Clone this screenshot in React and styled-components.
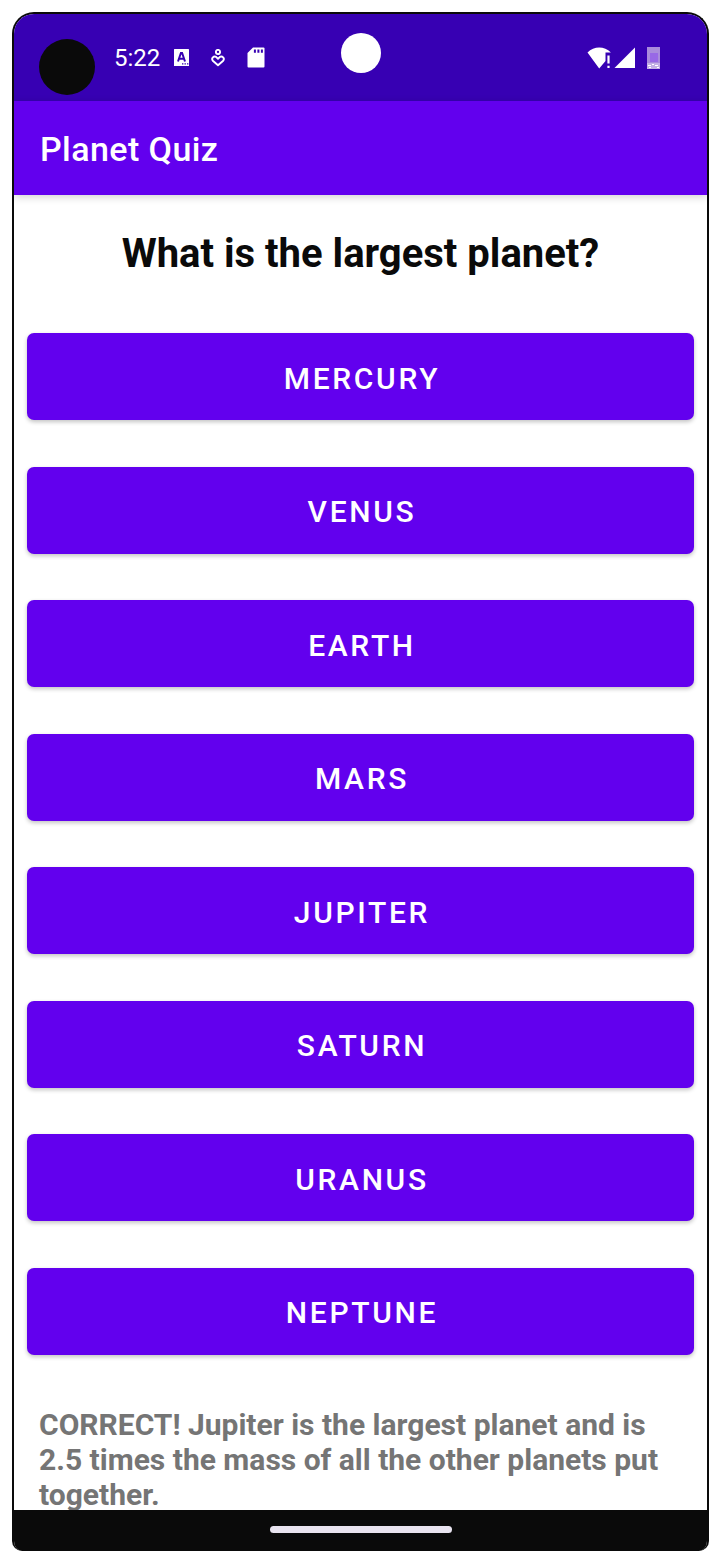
import React, { useState } from "react";
import styled, { createGlobalStyle } from "styled-components";

const GlobalStyle = createGlobalStyle`
  *, *::before, *::after { box-sizing: border-box; }
  body {
    margin: 0;
    background: #ffffff;
    font-family: Roboto, "Liberation Sans", sans-serif;
  }
`;

const Page = styled.div`
  padding: 12px 11px 12px 12px;
`;

const Phone = styled.div`
  display: flex;
  flex-direction: column;
  overflow: hidden;
  border: 2px solid #0a0a0a;
  border-bottom-width: 0;
  border-radius: 22px 22px 10px 10px;
  background: #ffffff;
`;

const StatusBar = styled.div`
  position: relative;
  display: flex;
  align-items: flex-start;
  height: 87px;
  padding: 25px 47px 0 25px;
  background: #3700b3;
  color: #ffffff;
`;

const Cutout = styled.span`
  width: 56px;
  height: 56px;
  border-radius: 50%;
  background: #0a0a0a;
`;

const Camera = styled.span`
  position: absolute;
  top: 19px;
  left: 50%;
  width: 40px;
  height: 40px;
  margin-left: -20px;
  border-radius: 50%;
  background: #ffffff;
`;

const StatusGroup = styled.div`
  display: flex;
  align-items: center;
  height: 37px;
  margin-left: ${(p) => (p.$end ? "auto" : "19px")};

  svg {
    display: block;
    flex: none;
  }
`;

const Time = styled.time`
  margin-right: 13px;
  font-size: 24px;
  line-height: 28px;
`;

const Notifications = styled.div`
  display: flex;
  align-items: center;
  gap: 22px;
`;

const Signals = styled.div`
  display: flex;
  align-items: center;
  gap: 2px;
  margin-right: 12px;
`;

const AppBar = styled.header`
  position: relative;
  display: flex;
  align-items: center;
  height: 94px;
  padding: 2px 26px 0;
  background: #6200ee;
  box-shadow: 0 2px 8px rgba(0, 0, 0, 0.18);
`;

const AppTitle = styled.h1`
  margin: 0;
  color: #ffffff;
  font-size: 34px;
  font-weight: 500;
  line-height: 40px;
  letter-spacing: 0.0125em;
`;

const Quiz = styled.main`
  display: flex;
  flex-direction: column;
  padding: 35px 13px 0;
`;

const Question = styled.h2`
  margin: 0 0 56px;
  color: #0a0a0a;
  font-size: 40px;
  font-weight: 700;
  line-height: 47px;
  text-align: center;
`;

const Answers = styled.div`
  display: flex;
  flex-direction: column;
  justify-content: space-between;
  min-height: 1022px;
`;

const AnswerButton = styled.button`
  height: 87px;
  padding: 3px 0 0 3px;
  border: 0;
  border-radius: 7px;
  background: #6200ee;
  box-shadow: 0 2px 4px rgba(0, 0, 0, 0.24);
  color: #ffffff;
  font-family: inherit;
  font-size: 30px;
  font-weight: 500;
  line-height: 35px;
  letter-spacing: 0.0892em;
  text-transform: uppercase;
  cursor: pointer;
`;

const Feedback = styled.p`
  margin: 52px 12px -2px;
  color: #757575;
  font-size: 30px;
  font-weight: 700;
  line-height: 35px;
`;

const NavigationBar = styled.footer`
  position: relative;
  display: flex;
  justify-content: center;
  height: 41px;
  padding-top: 16px;
  background: #0a0a0a;
`;

const HomeHandle = styled.span`
  width: 182px;
  height: 7px;
  border-radius: 4px;
  background: #e9e4f0;
`;

function KeyboardIcon() {
  return (
    <svg width="16" height="18" viewBox="0 0 16 18" aria-hidden="true">
      <rect x="1" width="15" height="17" rx="0.6" fill="#fff" />
      <path d="M5 12.500 7.900 4h1.200l2.900 8.500M6 9.800h5" fill="none" stroke="#3700b3" strokeWidth="2" />
      <path d="M9 14.800h1.400M11.500 14.800h1.400M14 14.800h1.400" stroke="#3700b3" strokeWidth="1.300" />
    </svg>
  );
}

function CareIcon() {
  return (
    <svg width="14" height="18" viewBox="0 0 14 18" fill="none" stroke="#fff" strokeWidth="1.9" aria-hidden="true">
      <circle cx="7" cy="3" r="2.100" />
      <path d="M7 16.300 2.100 12C-0.400 9.200 3 6.300 5.300 8.100L7 9.700l1.700-1.600c2.300-1.800 5.700 1.100 3.200 3.900Z" strokeLinejoin="round" />
    </svg>
  );
}

function StorageIcon() {
  return (
    <svg width="18" height="22" viewBox="0 0 18 22" aria-hidden="true">
      <path d="M6 0.500h10.500a1 1 0 0 1 1 1v18a1 1 0 0 1-1 1H1.500a1 1 0 0 1-1-1V6Z" fill="#fff" />
      <path d="M7.900 2.500v3.200M11.400 2.500v3.200M14.900 2.500v3.200" stroke="#3700b3" strokeWidth="2" />
    </svg>
  );
}

function WifiIcon() {
  return (
    <svg width="25" height="22" viewBox="0 0 25 22" aria-hidden="true">
      <path d="M0.500 5.600C3.800 2 8 0.400 12.200 0.400s8.400 1.600 11.700 5.200H18.500v8.500L12.200 21.500Z" fill="#fff" />
      <path d="M21.500 8.500v8M21.500 18.800v2.200" stroke="#fff" strokeWidth="2.200" />
    </svg>
  );
}

function CellularIcon() {
  return (
    <svg width="21" height="22" viewBox="0 0 21 22" aria-hidden="true">
      <path d="M21 0.500v20.500H0.500Z" fill="#fff" />
    </svg>
  );
}

function BatteryIcon() {
  return (
    <svg width="13" height="22" viewBox="0 0 13 22" aria-hidden="true">
      <rect width="13" height="22" fill="#a98bdc" />
      <rect x="3" y="6" width="8" height="9" fill="#9868e6" />
      <rect y="16" width="13" height="6" fill="#c4b0e6" />
      <path d="M1 18.500h3M5 17.500h2M8 18.500h3M2 20.500h2M10 20.500h2" stroke="#ffffff" />
    </svg>
  );
}

const planets = ["Mercury", "Venus", "Earth", "Mars", "Jupiter", "Saturn", "Uranus", "Neptune"];
const largest = "Jupiter";

export default function App() {
  const [answer, setAnswer] = useState(largest);

  return (
    <>
      <GlobalStyle />
      <Page>
        <Phone>
          <StatusBar>
            <Cutout />
            <StatusGroup>
              <Time>5:22</Time>
              <Notifications>
                <KeyboardIcon />
                <CareIcon />
                <StorageIcon />
              </Notifications>
            </StatusGroup>
            <Camera />
            <StatusGroup $end>
              <Signals>
                <WifiIcon />
                <CellularIcon />
              </Signals>
              <BatteryIcon />
            </StatusGroup>
          </StatusBar>
          <AppBar>
            <AppTitle>Planet Quiz</AppTitle>
          </AppBar>
          <Quiz>
            <Question>What is the largest planet?</Question>
            <Answers>
              {planets.map((planet) => (
                <AnswerButton key={planet} type="button" onClick={() => setAnswer(planet)}>
                  {planet}
                </AnswerButton>
              ))}
            </Answers>
            <Feedback role="status">
              {answer === largest
                ? "CORRECT! Jupiter is the largest planet and is 2.5 times the mass of all the other planets put together."
                : `WRONG! ${answer} is not the largest planet. Try again.`}
            </Feedback>
          </Quiz>
          <NavigationBar>
            <HomeHandle />
          </NavigationBar>
        </Phone>
      </Page>
    </>
  );
}
